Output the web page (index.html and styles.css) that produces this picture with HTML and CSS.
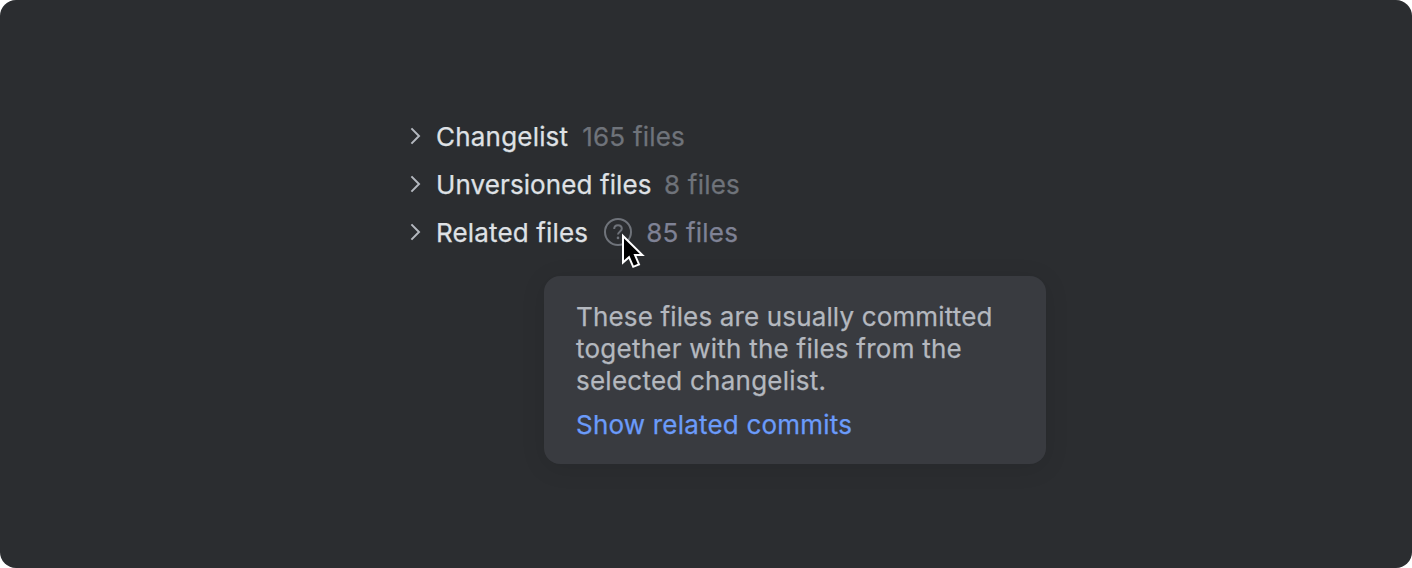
FILE: index.html
```html
<!DOCTYPE html>
<html lang="en">
<head>
<meta charset="utf-8">
<title>Related files</title>
<link rel="stylesheet" href="styles.css">
</head>
<body>
<main class="stage">
  <ul class="tree">
    <li class="row">
      <svg class="chevron" viewBox="0 0 12 20"><path d="M1.4 2.4 9 10 1.4 17.6"/></svg>
      <span class="name name-short">Changelist</span><span class="count">165 files</span>
    </li>
    <li class="row">
      <svg class="chevron" viewBox="0 0 12 20"><path d="M1.4 2.4 9 10 1.4 17.6"/></svg>
      <span class="name name-long">Unversioned files</span><span class="count count-near">8 files</span>
    </li>
    <li class="row">
      <svg class="chevron" viewBox="0 0 12 20"><path d="M1.4 2.4 9 10 1.4 17.6"/></svg>
      <span class="name">Related files</span>
      <span class="help">
        <svg class="help-icon" viewBox="0 0 28 28"><circle cx="14" cy="14" r="13"/><path d="M10.2 10.9C10.2 8.6 11.8 7.2 14 7.2S17.8 8.6 17.8 10.7C17.8 13.3 14 13.6 14 16.6"/><circle class="dot" cx="14" cy="19.9" r="1.3"/></svg>
        <svg class="cursor" viewBox="0 0 28 40"><path d="M3 4V30.5L9 25.2 13.2 34.8 19 32.4 15 23.1H22.4Z"/></svg>
      </span>
      <span class="count count-related">85 files</span>
    </li>
  </ul>
  <aside class="tooltip">
    <p class="message"><span class="first-line">These files are usually committed</span><br>together with the files from the<br>selected changelist.</p>
    <a class="link">Show related commits</a>
  </aside>
</main>
</body>
</html>
```
FILE: styles.css
```css
body {
  margin: 0;
  background: #fff;
  font-family: Inter, sans-serif;
  font-size: 26px;
  -webkit-text-stroke: 0.25px currentColor;
}
.stage {
  box-sizing: border-box;
  height: 568px;
  padding: 112px 0 0 410px;
  border-radius: 16px;
  background: #2b2d30;
}
.tree {
  margin: 0;
  padding: 0;
  list-style: none;
}
.row {
  display: flex;
  align-items: center;
  height: 48px;
  white-space: nowrap;
}
.chevron {
  width: 12px;
  height: 20px;
  margin-right: 14px;
  fill: none;
  stroke: #b4b8bf;
  stroke-width: 2;
}
.name {
  color: #dfe1e5;
  letter-spacing: 0.16px;
}
.name-short {
  letter-spacing: 0.2px;
}
.name-long {
  letter-spacing: 0.1px;
}
.count {
  margin-left: 14px;
  color: #6f737a;
  letter-spacing: 0.2px;
}
.count-near {
  margin-left: 12.5px;
}
.count-related {
  color: #7f8295;
}
.help {
  position: relative;
  width: 28px;
  height: 28px;
  margin-left: 16px;
}
.help-icon {
  display: block;
  fill: none;
  stroke: #6f737a;
  stroke-width: 2;
}
.dot {
  fill: #6f737a;
  stroke: none;
}
.cursor {
  position: absolute;
  left: 16px;
  top: 14px;
  width: 28px;
  height: 40px;
  fill: #000;
  stroke: #fff;
  stroke-width: 2;
}
.tooltip {
  box-sizing: border-box;
  width: 502px;
  height: 188px;
  margin: 20px 0 0 134px;
  padding: 25px 32px;
  border-radius: 16px;
  background: #393b40;
  box-shadow: 0 4px 24px rgba(0, 0, 0, 0.1);
  line-height: 32px;
}
.message {
  margin: 0 0 12px;
  color: #b4b8bf;
  letter-spacing: 0.24px;
}
.first-line {
  letter-spacing: 0.15px;
}
.link {
  color: #6b9bfa;
  letter-spacing: 0.2px;
}
```
